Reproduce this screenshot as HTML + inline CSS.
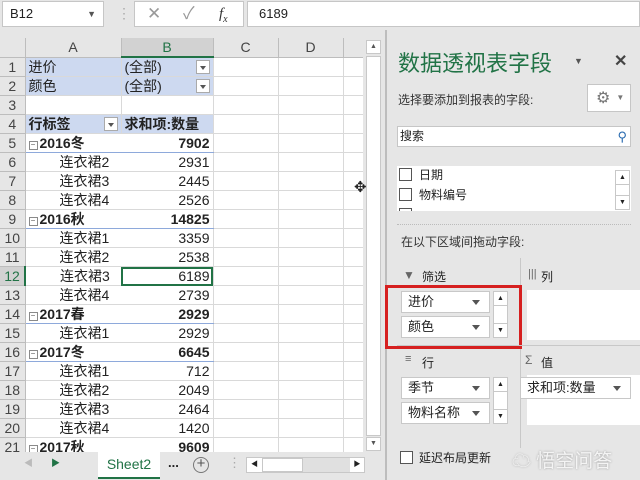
<!DOCTYPE html>
<html><head><meta charset="utf-8"><style>
*{box-sizing:border-box;margin:0;padding:0}
body{width:640px;height:480px;overflow:hidden;background:#e6e6e6;font-family:"Liberation Sans","Noto Sans CJK SC",sans-serif;position:relative;font-size:13px;color:#222}
.abs{position:absolute}
.box{position:absolute;background:#fff;border:1px solid #c6c6c6}
table{border-collapse:collapse;table-layout:fixed;position:absolute;left:0;top:38px}
td{height:19px;border-right:1px solid #d9d9d9;border-bottom:1px solid #d9d9d9;padding:0 3px;white-space:nowrap;overflow:hidden;font-size:14px;line-height:18px;background:#fff}
td.rh{background:#e6e6e6;color:#444;text-align:center;font-size:14px;border-color:#bdbdbd;padding:0}
tr.hd td{height:18px;background:#e6e6e6;text-align:center;color:#444;border-color:#bdbdbd}
.bl{background:#cdd9f0 !important}
.r{text-align:right}
.b{font-weight:bold}
.g td.c{border-bottom:1px solid #8ea9db}
.ind{padding-left:34px}
.m{display:inline-block;width:9px;height:9px;border:1px solid #8a8a8a;font-size:8px;line-height:6px;text-align:center;vertical-align:1px;margin-right:2px;color:#555;font-weight:normal}
.dd{float:right;width:14px;height:14px;border:1px solid #aaa;background:#fff;margin-top:2px;position:relative}
.dd:after{content:"";position:absolute;left:3px;top:5px;border:3px solid transparent;border-top:4px solid #555}
.pf{position:absolute;background:#fff;border:1px solid #c8c8c8;height:22px;font-size:13px;line-height:20px;padding-left:6px}
.pf:after{content:"";position:absolute;right:9px;top:8px;border:4px solid transparent;border-top:5px solid #555}
.sb{position:absolute;background:#fff;border:1px solid #c8c8c8;width:15px}
</style></head><body>
<!-- formula bar -->
<div class="box" style="left:2px;top:1px;width:102px;height:26px;font-size:13px;line-height:24px;padding-left:7px">B12<span style="position:absolute;right:7px;top:0;font-size:9px;color:#555">▼</span></div>
<div class="abs" style="left:117px;top:5px;color:#aaa;font-size:14px">⋮</div>
<div class="box" style="left:134px;top:1px;width:110px;height:26px;color:#999;font-size:17px;line-height:24px"><span style="position:absolute;left:12px">✕</span><span style="position:absolute;left:48px">✓</span><span style="position:absolute;left:84px;font-family:'Liberation Serif',serif;font-style:italic;color:#333;font-size:15px">f<sub style="font-size:10px">x</sub></span></div>
<div class="box" style="left:247px;top:1px;width:393px;height:26px;font-size:13px;line-height:24px;padding-left:11px">6189</div>

<table>
<colgroup><col style="width:25px"><col style="width:96px"><col style="width:92px"><col style="width:65px"><col style="width:65px"><col style="width:20px"></colgroup>
<tr class="hd"><td style="border-right:1px solid #bdbdbd"></td><td>A</td><td style="background:#d2d2d2;border-bottom:2px solid #217346;color:#217346">B</td><td>C</td><td>D</td><td></td></tr>
<tr><td class="rh">1</td><td class="bl">进价</td><td class="bl">(全部)<span class="dd"></span></td><td></td><td></td><td></td></tr>
<tr><td class="rh">2</td><td class="bl">颜色</td><td class="bl">(全部)<span class="dd"></span></td><td></td><td></td><td></td></tr>
<tr><td class="rh">3</td><td></td><td></td><td></td><td></td><td></td></tr>
<tr><td class="rh">4</td><td class="bl b">行标签<span class="dd"></span></td><td class="bl b">求和项:数量</td><td></td><td></td><td></td></tr>
<tr class="g"><td class="rh">5</td><td class="c b" style="border-right:none"><span class="m">−</span>2016冬</td><td class="c b r">7902</td><td></td><td></td><td></td></tr>
<tr><td class="rh">6</td><td class="ind" style="border-right:none">连衣裙2</td><td class="r">2931</td><td></td><td></td><td></td></tr>
<tr><td class="rh">7</td><td class="ind" style="border-right:none">连衣裙3</td><td class="r">2445</td><td></td><td></td><td></td></tr>
<tr><td class="rh">8</td><td class="ind" style="border-right:none">连衣裙4</td><td class="r">2526</td><td></td><td></td><td></td></tr>
<tr class="g"><td class="rh">9</td><td class="c b" style="border-right:none"><span class="m">−</span>2016秋</td><td class="c b r">14825</td><td></td><td></td><td></td></tr>
<tr><td class="rh">10</td><td class="ind" style="border-right:none">连衣裙1</td><td class="r">3359</td><td></td><td></td><td></td></tr>
<tr><td class="rh">11</td><td class="ind" style="border-right:none">连衣裙2</td><td class="r">2538</td><td></td><td></td><td></td></tr>
<tr><td class="rh" style="background:#d2d2d2;border-right:2px solid #217346;color:#217346">12</td><td class="ind" style="border-right:none">连衣裙3</td><td class="r" style="outline:2px solid #217346;outline-offset:-2px">6189</td><td></td><td></td><td></td></tr>
<tr><td class="rh">13</td><td class="ind" style="border-right:none">连衣裙4</td><td class="r">2739</td><td></td><td></td><td></td></tr>
<tr class="g"><td class="rh">14</td><td class="c b" style="border-right:none"><span class="m">−</span>2017春</td><td class="c b r">2929</td><td></td><td></td><td></td></tr>
<tr><td class="rh">15</td><td class="ind" style="border-right:none">连衣裙1</td><td class="r">2929</td><td></td><td></td><td></td></tr>
<tr class="g"><td class="rh">16</td><td class="c b" style="border-right:none"><span class="m">−</span>2017冬</td><td class="c b r">6645</td><td></td><td></td><td></td></tr>
<tr><td class="rh">17</td><td class="ind" style="border-right:none">连衣裙1</td><td class="r">712</td><td></td><td></td><td></td></tr>
<tr><td class="rh">18</td><td class="ind" style="border-right:none">连衣裙2</td><td class="r">2049</td><td></td><td></td><td></td></tr>
<tr><td class="rh">19</td><td class="ind" style="border-right:none">连衣裙3</td><td class="r">2464</td><td></td><td></td><td></td></tr>
<tr><td class="rh">20</td><td class="ind" style="border-right:none">连衣裙4</td><td class="r">1420</td><td></td><td></td><td></td></tr>
<tr class="g"><td class="rh">21</td><td class="c b" style="border-right:none"><span class="m">−</span>2017秋</td><td class="c b r">9609</td><td></td><td></td><td></td></tr>
</table>
<!-- vertical scrollbar -->
<div class="abs" style="left:363px;top:38px;width:20px;height:414px;background:#e6e6e6"></div>
<div class="abs" style="left:366px;top:40px;width:15px;height:14px;background:#fff;border:1px solid #c8c8c8;font-size:7px;text-align:center;line-height:12px;color:#555">▲</div>
<div class="abs" style="left:366px;top:56px;width:15px;height:380px;background:#fff;border:1px solid #c8c8c8"></div>
<div class="abs" style="left:366px;top:437px;width:15px;height:14px;background:#fff;border:1px solid #c8c8c8;font-size:7px;text-align:center;line-height:12px;color:#555">▼</div>
<div class="abs" style="left:354px;top:178px;font-size:15px">✥</div>
<!-- tab bar -->
<div class="abs" style="left:0;top:452px;width:385px;height:28px;background:#e6e6e6"></div>
<div class="abs" style="left:24px;top:456px;font-size:9px;color:#bbb">◀</div>
<div class="abs" style="left:51px;top:456px;font-size:9px;color:#217346">▶</div>
<div class="abs" style="left:98px;top:452px;width:62px;height:27px;background:#fff;border-bottom:2px solid #217346;color:#217346;font-size:14px;text-align:center;line-height:24px">Sheet2</div>
<div class="abs" style="left:168px;top:455px;font-weight:bold">...</div>
<div class="abs" style="left:193px;top:457px;width:16px;height:16px;border:1.5px solid #777;border-radius:50%;text-align:center;line-height:12px;font-size:15px;color:#555">+</div>
<div class="abs" style="left:228px;top:455px;color:#aaa">⋮</div>
<div class="abs" style="left:246px;top:457px;width:119px;height:16px;background:#e0e0e0;border:1px solid #c8c8c8"></div>
<div class="abs" style="left:247px;top:458px;width:15px;height:14px;background:#fff;font-size:7px;line-height:14px;text-align:center">◀</div>
<div class="abs" style="left:262px;top:458px;width:41px;height:14px;background:#fff;border:1px solid #c8c8c8"></div>
<div class="abs" style="left:350px;top:458px;width:14px;height:14px;background:#fff;font-size:7px;line-height:14px;text-align:center">▶</div>
<!-- panel -->
<div class="abs" style="left:385px;top:30px;width:2px;height:450px;background:#bdbdbd"></div>
<div class="abs" style="left:398px;top:49px;font-size:22px;color:#217346;line-height:30px">数据透视表字段</div>
<div class="abs" style="left:574px;top:56px;font-size:9px;color:#555">▼</div>
<div class="abs" style="left:614px;top:51px;font-size:16px;color:#444;font-weight:bold">✕</div>
<div class="abs" style="left:398px;top:91px;font-size:12px;color:#333">选择要添加到报表的字段:</div>
<div class="box" style="left:587px;top:84px;width:44px;height:28px;font-size:16px;color:#777;line-height:26px;padding-left:8px">⚙<span style="font-size:8px;margin-left:6px;vertical-align:3px">▼</span></div>
<div class="box" style="left:397px;top:126px;width:234px;height:21px;font-size:12px;line-height:19px;padding-left:2px">搜索<span style="position:absolute;right:3px;top:0;color:#2b6cb0;font-size:13px">⚲</span></div>
<div class="abs" style="left:397px;top:166px;width:234px;height:45px;background:#fff;overflow:hidden">
 <div class="abs" style="left:2px;top:2px;width:13px;height:13px;border:1px solid #555"></div><div class="abs" style="left:22px;top:0px;font-size:12px">日期</div>
 <div class="abs" style="left:2px;top:22px;width:13px;height:13px;border:1px solid #555"></div><div class="abs" style="left:22px;top:20px;font-size:12px">物料编号</div>
 <div class="abs" style="left:2px;top:42px;width:13px;height:13px;border:1px solid #555"></div>
</div>
<div class="sb" style="left:615px;top:170px;height:40px"><div style="height:14px;font-size:7px;text-align:center;line-height:13px;border-bottom:1px solid #c8c8c8">▲</div><div style="position:absolute;bottom:0;width:13px;height:14px;font-size:7px;text-align:center;line-height:13px;border-top:1px solid #c8c8c8">▼</div></div>
<div class="abs" style="left:397px;top:224px;width:234px;border-top:1px dotted #bbb"></div>
<div class="abs" style="left:401px;top:233px;font-size:12px;color:#333">在以下区域间拖动字段:</div>
<div class="abs" style="left:403px;top:268px;font-size:12px;color:#666">▼</div><div class="abs" style="left:422px;top:268px;font-size:12px">筛选</div>
<div class="abs" style="left:520px;top:258px;width:1px;height:190px;background:#c8c8c8"></div>
<div class="abs" style="left:528px;top:268px;font-size:11px;color:#666">|||</div><div class="abs" style="left:541px;top:268px;font-size:12px">列</div>
<div class="abs" style="left:527px;top:290px;width:113px;height:50px;background:#fff"></div>
<div class="pf" style="left:401px;top:291px;width:89px">进价</div>
<div class="pf" style="left:401px;top:316px;width:89px">颜色</div>
<div class="sb" style="left:493px;top:291px;height:47px"><div style="height:14px;font-size:7px;text-align:center;line-height:13px;border-bottom:1px solid #c8c8c8">▲</div><div style="position:absolute;bottom:0;width:13px;height:14px;font-size:7px;text-align:center;line-height:13px;border-top:1px solid #c8c8c8">▼</div></div>
<div class="abs" style="left:385px;top:285px;width:137px;height:64px;border:3px solid #d62020"></div>
<div class="abs" style="left:397px;top:345px;width:243px;height:1px;background:#c8c8c8"></div>
<div class="abs" style="left:405px;top:353px;font-size:11px;color:#666">≡</div><div class="abs" style="left:422px;top:354px;font-size:12px">行</div>
<div class="abs" style="left:525px;top:353px;font-size:12px;color:#666">Σ</div><div class="abs" style="left:541px;top:354px;font-size:12px">值</div>
<div class="abs" style="left:527px;top:375px;width:113px;height:50px;background:#fff"></div>
<div class="pf" style="left:401px;top:377px;width:89px">季节</div>
<div class="pf" style="left:401px;top:402px;width:89px">物料名称</div>
<div class="sb" style="left:493px;top:377px;height:47px"><div style="height:14px;font-size:7px;text-align:center;line-height:13px;border-bottom:1px solid #c8c8c8">▲</div><div style="position:absolute;bottom:0;width:13px;height:14px;font-size:7px;text-align:center;line-height:13px;border-top:1px solid #c8c8c8">▼</div></div>
<div class="pf" style="left:520px;top:377px;width:111px">求和项:数量</div>
<div class="abs" style="left:400px;top:451px;width:13px;height:13px;border:1px solid #555;background:#fff"></div>
<div class="abs" style="left:419px;top:449px;font-size:12px">延迟布局更新</div>
<div class="abs" style="left:512px;top:446px;font-size:19px;color:#f4f4f4;text-shadow:0 0 2px #999">☁ 悟空问答</div>
</body></html>
